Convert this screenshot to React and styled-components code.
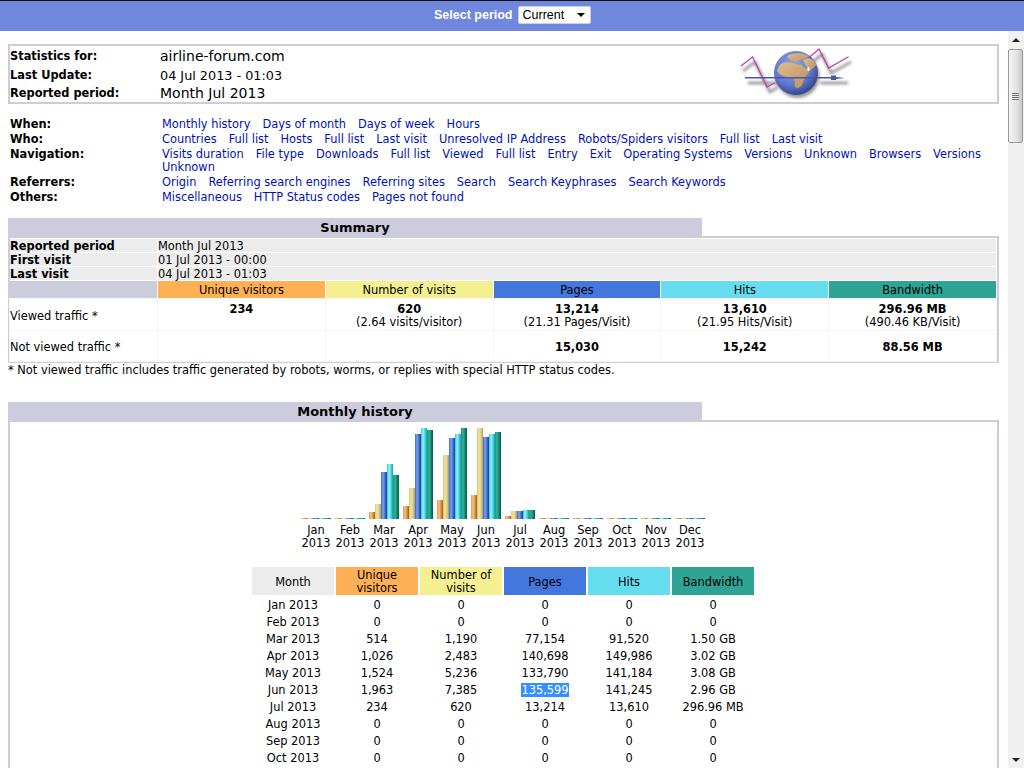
import React from 'react';
import styled, { createGlobalStyle } from 'styled-components';

const GlobalStyle = createGlobalStyle`
  html, body {
    margin: 0;
    height: 100%;
    overflow: hidden;
    background: #fff;
    color: #000;
    font: 11.4px/13px "DejaVu Sans", Verdana, sans-serif;
  }
`;

const colors = {
  u: '#ffb055',
  v: '#f4f090',
  p: '#4477dd',
  h: '#66ddee',
  k: '#2ea495',
  title: '#ccccdd',
  cell: '#ececec',
};

const barGradients = {
  u: 'linear-gradient(90deg, #e09a50, #f4c488 35%, #d88c38 70%, #a05c14)',
  v: 'linear-gradient(90deg, #d4c478, #f0e4a4 35%, #dccc80 70%, #a89848)',
  p: 'linear-gradient(90deg, #3c68d0, #7ca4f0 35%, #3c68d0 70%, #1c3c9c)',
  h: 'linear-gradient(90deg, #30c4d8, #98f4fa 35%, #40d0e0 70%, #109cb0)',
  k: 'linear-gradient(90deg, #18987c, #3cb094 35%, #108468 70%, #006048)',
};

const Page = styled.div`
  display: flex;
  flex-direction: column;
  height: 100vh;
  overflow: hidden;
`;

const TopBar = styled.form`
  flex: none;
  box-sizing: border-box;
  height: 31px;
  margin: 0;
  padding: 0 0 3px 434px;
  display: flex;
  align-items: center;
  gap: 5px;
  border-top: 1px solid #111;
  background: #6f88de;
  color: #fff;
  font: bold 12.5px "Liberation Sans", Arial, sans-serif;
`;

const SelectWrap = styled.div`
  position: relative;
  width: 73px;
  height: 18px;
  &::after {
    content: '';
    position: absolute;
    right: 6px;
    top: 7px;
    border: 4px solid transparent;
    border-bottom: 0;
    border-top-color: #000;
  }
`;

const PeriodSelect = styled.select`
  appearance: none;
  box-sizing: border-box;
  width: 100%;
  height: 100%;
  padding: 0 0 0 4px;
  border: 1px solid #c8d0e8;
  border-radius: 2px;
  background: #fff;
  color: #000;
  font: 12.5px "Liberation Sans", Arial, sans-serif;
`;

const Main = styled.div`
  flex: 1;
  min-height: 0;
  display: flex;
`;

const Content = styled.main`
  flex: 1;
  min-width: 0;
  overflow: hidden;
  padding: 13px 9px 0 8px;
`;

const Scrollbar = styled.div`
  flex: none;
  width: 16px;
  position: relative;
  background: #f0f0f0;
`;

const ScrollArrow = styled.div`
  position: absolute;
  left: 4px;
  ${p => (p.$down ? 'bottom: 6px;' : 'top: 7px;')}
  border: 4px solid transparent;
  ${p => (p.$down ? 'border-bottom: 0; border-top-color: #222;' : 'border-top: 0; border-bottom-color: #222;')}
`;

const ScrollThumb = styled.div`
  position: absolute;
  top: 18px;
  left: 0;
  right: 1px;
  height: 94px;
  box-sizing: border-box;
  display: flex;
  flex-direction: column;
  justify-content: center;
  gap: 1px;
  align-items: center;
  border: 1px solid #9a9a9a;
  border-radius: 2px;
  background: linear-gradient(90deg, #f4f4f4, #e2e2e2 60%, #c8c8c8);
`;

const Grip = styled.span`
  width: 7px;
  height: 1px;
  background: #777;
`;

const InfoBox = styled.section`
  display: grid;
  grid-template-columns: 150px 570px 1fr;
  grid-template-rows: 20px 18px 18px;
  border: 2px solid ${colors.title};
  align-items: center;
`;

const InfoLabel = styled.b`
  grid-column: 1;
  padding-top: 1px;
`;

const InfoValue = styled.span`
  grid-column: 2;
  font-size: ${p => (p.$large ? '14px' : '12.8px')};
`;

const LogoWrap = styled.div`
  grid-column: 3;
  grid-row: 1 / 4;
  height: 56px;
  svg {
    display: block;
  }
`;

const NavGrid = styled.nav`
  display: grid;
  grid-template-columns: 152px 1fr;
  padding: 13px 0 13px 2px;
`;

const NavLabel = styled.b`
  padding: 1px 0;
`;

const NavLinks = styled.div`
  padding: 1px 0;
`;

const NavLink = styled.a`
  display: inline-block;
  margin-right: 12px;
  color: #0011bb;
  text-decoration: none;
  white-space: nowrap;
`;

const SectionTitle = styled.h2`
  width: 694px;
  height: 18px;
  margin: 0;
  background: ${colors.title};
  font-size: 13px;
  line-height: 19px;
  text-align: center;
`;

const SummaryBox = styled.section`
  border: 2px solid ${colors.title};
  padding: 1px 1px 0 0;
`;

const SummaryGrid = styled.div`
  display: grid;
  grid-template-columns: 147px repeat(5, 1fr);
  grid-template-rows: 13px 13px 13px 17px 31px 30px;
  gap: 1px;
`;

const GrayLabel = styled.b`
  background: ${colors.cell};
  line-height: 15px;
`;

const GrayValue = styled.span`
  grid-column: 2 / -1;
  background: ${colors.cell};
  line-height: 15px;
`;

const HeadCell = styled.div`
  background: ${p => p.$bg};
  line-height: 19px;
  text-align: center;
`;

const RowLabel = styled.div`
  display: flex;
  align-items: center;
  padding-top: ${p => (p.$low ? '4px' : '3px')};
  box-sizing: border-box;
  outline: 1px solid #f6f6f6;
`;

const DataCell = styled.div`
  outline: 1px solid #f6f6f6;
  text-align: center;
  padding-top: ${p => (p.$middle ? '10px' : '4px')};
`;

const Footnote = styled.p`
  margin: 1px 0 25px;
`;

const HistoryBox = styled.section`
  border: 2px solid ${colors.title};
  padding: 6px 1px 40px 0;
  display: flex;
  flex-direction: column;
  align-items: center;
`;

const Chart = styled.div`
  display: grid;
  grid-template-columns: repeat(12, 30px);
  gap: 4px;
`;

const MonthColumn = styled.div`
  display: flex;
  flex-direction: column;
  align-items: center;
  gap: 5px;
  text-align: center;
`;

const Bars = styled.div`
  display: flex;
  align-items: flex-end;
  height: 91px;
`;

const Bar = styled.div`
  width: 6px;
  background: ${p => barGradients[p.$kind]};
`;

const MonthTable = styled.div`
  margin-top: 17px;
  display: grid;
  grid-template-columns: repeat(6, 82px);
  grid-template-rows: 30px;
  grid-auto-rows: 17px;
  column-gap: 2px;
  text-align: center;
  line-height: 17px;
`;

const MonthHead = styled.div`
  box-sizing: border-box;
  height: 28px;
  padding-top: 2px;
  display: flex;
  align-items: center;
  justify-content: center;
  line-height: 13px;
  background: ${p => p.$bg};
`;

const Selected = styled.span`
  display: inline-block;
  line-height: 14px;
  background: #3390ff;
  color: #fff;
`;

const navRows = [
  ['When:', ['Monthly history', 'Days of month', 'Days of week', 'Hours']],
  ['Who:', ['Countries', 'Full list', 'Hosts', 'Full list', 'Last visit', 'Unresolved IP Address', 'Robots/Spiders visitors', 'Full list', 'Last visit']],
  ['Navigation:', ['Visits duration', 'File type', 'Downloads', 'Full list', 'Viewed', 'Full list', 'Entry', 'Exit', 'Operating Systems', 'Versions', 'Unknown', 'Browsers', 'Versions', 'Unknown']],
  ['Referrers:', ['Origin', 'Referring search engines', 'Referring sites', 'Search', 'Search Keyphrases', 'Search Keywords']],
  ['Others:', ['Miscellaneous', 'HTTP Status codes', 'Pages not found']],
];

const barKinds = ['u', 'v', 'p', 'h', 'k'];

const chartMonths = [
  ['Jan', [1, 1, 1, 1, 1]],
  ['Feb', [1, 1, 1, 1, 1]],
  ['Mar', [7, 15, 47, 55, 44]],
  ['Apr', [13, 31, 85, 91, 89]],
  ['May', [19, 64, 81, 85, 91]],
  ['Jun', [24, 91, 82, 85, 87]],
  ['Jul', [3, 8, 8, 9, 9]],
  ['Aug', [1, 1, 1, 1, 1]],
  ['Sep', [1, 1, 1, 1, 1]],
  ['Oct', [1, 1, 1, 1, 1]],
  ['Nov', [1, 1, 1, 1, 1]],
  ['Dec', [1, 1, 1, 1, 1]],
];

const monthRows = [
  ['Jan 2013', '0', '0', '0', '0', '0'],
  ['Feb 2013', '0', '0', '0', '0', '0'],
  ['Mar 2013', '514', '1,190', '77,154', '91,520', '1.50 GB'],
  ['Apr 2013', '1,026', '2,483', '140,698', '149,986', '3.02 GB'],
  ['May 2013', '1,524', '5,236', '133,790', '141,184', '3.08 GB'],
  ['Jun 2013', '1,963', '7,385', '135,599', '141,245', '2.96 GB'],
  ['Jul 2013', '234', '620', '13,214', '13,610', '296.96 MB'],
  ['Aug 2013', '0', '0', '0', '0', '0'],
  ['Sep 2013', '0', '0', '0', '0', '0'],
  ['Oct 2013', '0', '0', '0', '0', '0'],
];

const Logo = () => (
  <svg width="130" height="56" viewBox="0 6 130 56">
    <defs>
      <radialGradient id="sea" cx="0.42" cy="0.35" r="0.72">
        <stop offset="0" stopColor="#93a9ee" />
        <stop offset="0.6" stopColor="#5f78cc" />
        <stop offset="1" stopColor="#2a3478" />
      </radialGradient>
      <linearGradient id="land" x1="0" y1="0" x2="1" y2="1">
        <stop offset="0" stopColor="#e0bc8c" />
        <stop offset="1" stopColor="#bb9060" />
      </linearGradient>
      <filter id="soft">
        <feGaussianBlur stdDeviation="1.4" />
      </filter>
    </defs>
    <g fill="none" stroke="#888" strokeWidth="2.4" filter="url(#soft)">
      <path d="M13 31L25 22L40 52L48 47" />
      <path d="M83 22L92 14L101 33L121 22" />
      <path d="M18 43H60M90 43H118" />
    </g>
    <circle cx="67.5" cy="36" r="22" fill="#999" filter="url(#soft)" />
    <g fill="none" stroke="#c23fb2" strokeWidth="1.3">
      <path d="M11 26L22.6 17L37 47L45 42.7" />
      <path d="M80 16.7L89 9L98.6 28L118.6 16.7" />
    </g>
    <circle cx="66" cy="33" r="22" fill="url(#sea)" />
    <g fill="url(#land)">
      <path d="M49 26C53 21 61 22 65 24L72 25C74 29 80 29 79 32C76 36 73 40 72 45C69 49 66 49 65 46C65 42 65 39 62 37C56 38 50 35 47 31Z" />
      <path d="M57 16C61 13 72 12 79 16C75 20 69 19 67 22C63 22 59 20 57 16Z" />
      <path d="M73 20C79 17 84 19 86 25C84 29 82 27 80 31C78 29 75 25 73 20Z" />
    </g>
    <ellipse cx="78.5" cy="29" rx="1.3" ry="2" fill="#eef" />
    <path d="M15 37H101V35.5H106V37L115 38L106 39V40H101V38.6H15Z" fill="#4a55a8" />
  </svg>
);

const App = () => (
  <Page>
    <GlobalStyle />
    <TopBar>
      Select period
      <SelectWrap>
        <PeriodSelect defaultValue="Current">
          <option>Current</option>
        </PeriodSelect>
      </SelectWrap>
    </TopBar>
    <Main>
      <Content>
        <InfoBox>
          <InfoLabel>Statistics for:</InfoLabel>
          <InfoValue $large>airline-forum.com</InfoValue>
          <LogoWrap>
            <Logo />
          </LogoWrap>
          <InfoLabel>Last Update:</InfoLabel>
          <InfoValue>04 Jul 2013 - 01:03</InfoValue>
          <InfoLabel>Reported period:</InfoLabel>
          <InfoValue $large>Month Jul 2013</InfoValue>
        </InfoBox>

        <NavGrid>
          {navRows.map(([label, links]) => (
            <React.Fragment key={label}>
              <NavLabel>{label}</NavLabel>
              <NavLinks>
                {links.map((link, i) => (
                  <NavLink href="#" key={i}>{link}</NavLink>
                ))}
              </NavLinks>
            </React.Fragment>
          ))}
        </NavGrid>

        <SectionTitle>Summary</SectionTitle>
        <SummaryBox>
          <SummaryGrid>
            <GrayLabel>Reported period</GrayLabel>
            <GrayValue>Month Jul 2013</GrayValue>
            <GrayLabel>First visit</GrayLabel>
            <GrayValue>01 Jul 2013 - 00:00</GrayValue>
            <GrayLabel>Last visit</GrayLabel>
            <GrayValue>04 Jul 2013 - 01:03</GrayValue>

            <HeadCell $bg={colors.title} />
            <HeadCell $bg={colors.u}>Unique visitors</HeadCell>
            <HeadCell $bg={colors.v}>Number of visits</HeadCell>
            <HeadCell $bg={colors.p}>Pages</HeadCell>
            <HeadCell $bg={colors.h}>Hits</HeadCell>
            <HeadCell $bg={colors.k}>Bandwidth</HeadCell>

            <RowLabel $low>Viewed traffic *</RowLabel>
            <DataCell><b>234</b></DataCell>
            <DataCell><b>620</b><br />(2.64 visits/visitor)</DataCell>
            <DataCell><b>13,214</b><br />(21.31 Pages/Visit)</DataCell>
            <DataCell><b>13,610</b><br />(21.95 Hits/Visit)</DataCell>
            <DataCell><b>296.96 MB</b><br />(490.46 KB/Visit)</DataCell>

            <RowLabel>Not viewed traffic *</RowLabel>
            <DataCell $middle />
            <DataCell $middle />
            <DataCell $middle><b>15,030</b></DataCell>
            <DataCell $middle><b>15,242</b></DataCell>
            <DataCell $middle><b>88.56 MB</b></DataCell>
          </SummaryGrid>
        </SummaryBox>
        <Footnote>* Not viewed traffic includes traffic generated by robots, worms, or replies with special HTTP status codes.</Footnote>

        <SectionTitle>Monthly history</SectionTitle>
        <HistoryBox>
          <Chart>
            {chartMonths.map(([month, heights]) => (
              <MonthColumn key={month}>
                <Bars>
                  {heights.map((h, i) => (
                    <Bar key={i} $kind={barKinds[i]} style={{ height: h }} />
                  ))}
                </Bars>
                <div>{month}<br />2013</div>
              </MonthColumn>
            ))}
          </Chart>

          <MonthTable>
            <MonthHead $bg={colors.cell}>Month</MonthHead>
            <MonthHead $bg={colors.u}>Unique<br />visitors</MonthHead>
            <MonthHead $bg={colors.v}>Number of<br />visits</MonthHead>
            <MonthHead $bg={colors.p}>Pages</MonthHead>
            <MonthHead $bg={colors.h}>Hits</MonthHead>
            <MonthHead $bg={colors.k}>Bandwidth</MonthHead>
            {monthRows.map(row =>
              row.map((value, i) => (
                <div key={row[0] + i}>
                  {value === '135,599' ? <Selected>{value}</Selected> : value}
                </div>
              ))
            )}
          </MonthTable>
        </HistoryBox>
      </Content>
      <Scrollbar>
        <ScrollArrow />
        <ScrollThumb>
          <Grip /><Grip /><Grip /><Grip />
        </ScrollThumb>
        <ScrollArrow $down />
      </Scrollbar>
    </Main>
  </Page>
);

export default App;
